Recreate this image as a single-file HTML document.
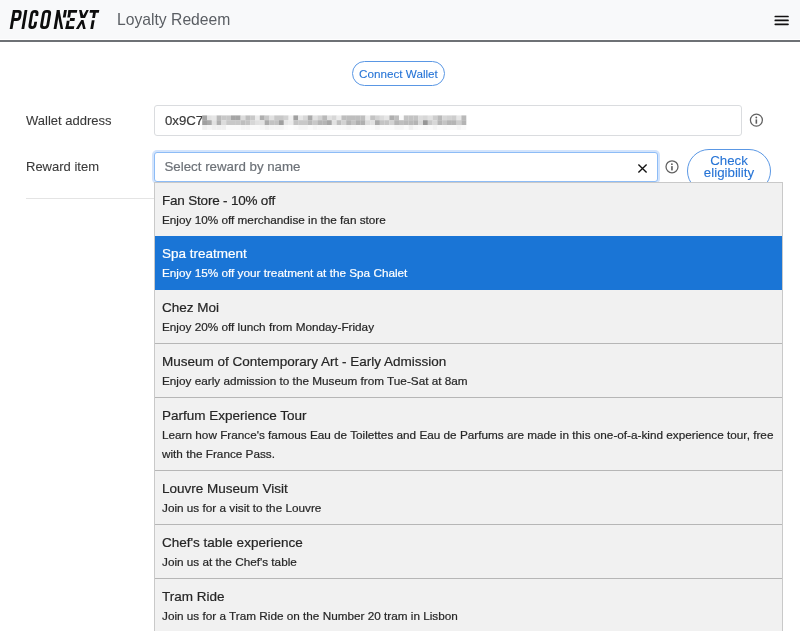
<!DOCTYPE html>
<html><head><meta charset="utf-8">
<style>
*{box-sizing:border-box;margin:0;padding:0}
html,body{width:800px;height:631px;overflow:hidden;background:#fff;-webkit-font-smoothing:antialiased;-webkit-text-stroke:0.2px;font-family:"Liberation Sans",sans-serif;color:#333}
.a{position:absolute;white-space:nowrap}
.hdr{position:absolute;left:0;top:0;width:800px;height:39px;background:#f8f9fa}
.hline{position:absolute;left:0;top:40px;width:800px;height:2px;background:#6e7175}
.title{left:117px;top:9.5px;font-size:15.7px;line-height:20px;color:#5a5e63;-webkit-text-stroke:0}
.burger i{position:absolute;left:774.5px;width:14px;height:1.8px;background:#111;border-radius:1px}
.cw{position:absolute;left:352px;top:61px;width:93px;height:25px;border:1px solid #5a97e4;border-radius:13px}
.cwt{left:359px;top:64.5px;font-size:11.7px;line-height:18px;color:#2674d6;-webkit-text-stroke:0.1px}
.lbl{font-size:13px;line-height:16px;color:#3a3a3a;-webkit-text-stroke:0.1px}
.inp{position:absolute;border:1px solid #dadcdf;border-radius:3px;background:#fff}
.info{position:absolute;width:13.2px;height:13.2px;border:1.3px solid #666;border-radius:50%}
.info:before{content:"";position:absolute;left:4.75px;top:2.7px;width:1.6px;height:1.6px;background:#666;border-radius:50%}
.info:after{content:"";position:absolute;left:4.8px;top:5.4px;width:1.5px;height:4px;background:#666}
.ce{position:absolute;left:686.5px;top:148.5px;width:84px;height:44px;border:1px solid #5a97e4;border-radius:22px;background:#fff}
.cet{font-size:13.3px;line-height:12px;color:#2674d6;text-align:center;-webkit-text-stroke:0.1px}
.hr{position:absolute;left:26px;top:198px;width:128px;height:1px;background:#e4e4e4}
.dd{will-change:transform;position:absolute;left:154px;top:182px;width:629px;height:460px;background:#f1f1f1;border:1px solid #c9c9c9;border-bottom:0}
.it{position:absolute;left:0;width:627px;background:#f1f1f1}
.bd{position:absolute;left:0;width:627px;height:1px;background:#b6b6b6}
.t{position:absolute;left:7px;top:8px;font-size:13.5px;line-height:19px;color:#262626;white-space:nowrap}
.d{position:absolute;left:7px;top:27px;font-size:11.75px;line-height:19px;color:#262626;white-space:nowrap}
.sel{background:#1a75d6}
.sel .t,.sel .d{color:#fff}
</style></head><body>
<div id="w" style="position:absolute;left:0;top:0;width:800px;height:631px;will-change:transform">
<div class="hdr"></div>
<div class="hline"></div>
<svg class="a" style="left:0;top:0" width="110" height="40" viewBox="0 0 110 40">
 <g transform="translate(0,10) skewX(-9.5) translate(0,-10)" fill="none" stroke="#0d0d0d" stroke-width="2.8">
  <path d="M14.3,10V29"/>
  <path d="M14.3,11.4H18.4Q20.9,11.4 20.9,13.9V17Q20.9,19.5 18.4,19.5H14.3"/>
  <path d="M26,10V29"/>
  <path d="M37.7,16V13.9Q37.7,11.4 35,11.4Q32.4,11.4 32.4,13.9V25.1Q32.4,27.6 35,27.6Q37.7,27.6 37.7,25.1V21.8"/>
  <path d="M44.1,13.9Q44.1,11.4 46.6,11.4H47.7Q50.3,11.4 50.3,13.9V25.1Q50.3,27.6 47.7,27.6H46.6Q44.1,27.6 44.1,25.1Z"/>
  <path d="M58.2,10V29"/>
  <path d="M65.5,10V17.6"/>
  <path d="M70,10V17.6M70,20.8V29"/>
  <path d="M68.6,11.4H77.3M71.5,19.5H76.3M68.6,27.6H77"/>
  <path d="M90,11.4H99.3M94.9,12V17.9M94.9,20.2V29"/>
 </g>
 <g transform="translate(0,10) skewX(-9.5) translate(0,-10)" fill="#0d0d0d">
  <polygon points="56.8,10 59.5,10 66.3,29 63.8,29"/>
 </g>
 <g fill="#0d0d0d">
  <polygon points="79.1,10 81.6,10 83.3,15.6 86.4,10 88.8,10 85.0,17.9 80.6,17.9"/>
  <polygon points="81.3,20 83.5,20 85.7,28.9 83.1,28.9 81.8,23.4 78.7,28.9 75.8,28.9"/>
 </g>
</svg>
<div class="a title">Loyalty Redeem</div>
<svg class="a" style="left:770px;top:10px" width="24" height="20" viewBox="770 10 24 20"><path d="M775.3,16.5H788M775.3,20.4H788M775.3,24.3H788" stroke="#111" stroke-width="1.7" stroke-linecap="round"/></svg>

<div class="cw"></div>
<div class="a cwt">Connect Wallet</div>

<div class="a lbl" style="left:26px;top:112.5px">Wallet address</div>
<div class="inp" style="left:154px;top:105px;width:588px;height:31px"></div>
<div class="a" style="left:165px;top:111px;font-size:13.2px;line-height:19px;color:#3b3b3b">0x9C7</div>
<svg class="a" style="left:0;top:0" width="800" height="140" viewBox="0 0 800 140"><rect x="202.2" y="115.4" width="4.9" height="4.9" fill="#a5a5a5"/><rect x="202.2" y="120.2" width="4.9" height="4.9" fill="#a0a0a0"/><rect x="202.2" y="125.0" width="4.9" height="4.9" fill="#f0f0f0"/><rect x="207.0" y="115.4" width="4.9" height="4.9" fill="#e1e1e1"/><rect x="207.0" y="120.2" width="4.9" height="4.9" fill="#aaaaaa"/><rect x="207.0" y="125.0" width="4.9" height="4.9" fill="#f5f5f5"/><rect x="211.8" y="115.4" width="4.9" height="4.9" fill="#e6e6e6"/><rect x="211.8" y="120.2" width="4.9" height="4.9" fill="#e1e1e1"/><rect x="211.8" y="125.0" width="4.9" height="4.9" fill="#f0f0f0"/><rect x="216.6" y="115.4" width="4.9" height="4.9" fill="#b9b9b9"/><rect x="216.6" y="120.2" width="4.9" height="4.9" fill="#afafaf"/><rect x="216.6" y="125.0" width="4.9" height="4.9" fill="#f0f0f0"/><rect x="221.4" y="115.4" width="4.9" height="4.9" fill="#c8c8c8"/><rect x="221.4" y="120.2" width="4.9" height="4.9" fill="#dcdcdc"/><rect x="221.4" y="125.0" width="4.9" height="4.9" fill="#f0f0f0"/><rect x="226.2" y="115.4" width="4.9" height="4.9" fill="#c8c8c8"/><rect x="226.2" y="120.2" width="4.9" height="4.9" fill="#c8c8c8"/><rect x="226.2" y="125.0" width="4.9" height="4.9" fill="#fafafa"/><rect x="231.0" y="115.4" width="4.9" height="4.9" fill="#a5a5a5"/><rect x="231.0" y="120.2" width="4.9" height="4.9" fill="#c8c8c8"/><rect x="231.0" y="125.0" width="4.9" height="4.9" fill="#fafafa"/><rect x="235.8" y="115.4" width="4.9" height="4.9" fill="#a5a5a5"/><rect x="235.8" y="120.2" width="4.9" height="4.9" fill="#c8c8c8"/><rect x="235.8" y="125.0" width="4.9" height="4.9" fill="#fafafa"/><rect x="240.6" y="115.4" width="4.9" height="4.9" fill="#dcdcdc"/><rect x="240.6" y="120.2" width="4.9" height="4.9" fill="#bebebe"/><rect x="240.6" y="125.0" width="4.9" height="4.9" fill="#f5f5f5"/><rect x="245.4" y="115.4" width="4.9" height="4.9" fill="#bebebe"/><rect x="245.4" y="120.2" width="4.9" height="4.9" fill="#c3c3c3"/><rect x="245.4" y="125.0" width="4.9" height="4.9" fill="#f5f5f5"/><rect x="250.2" y="115.4" width="4.9" height="4.9" fill="#c8c8c8"/><rect x="250.2" y="120.2" width="4.9" height="4.9" fill="#d7d7d7"/><rect x="250.2" y="125.0" width="4.9" height="4.9" fill="#fafafa"/><rect x="255.0" y="115.4" width="4.9" height="4.9" fill="#ebebeb"/><rect x="255.0" y="120.2" width="4.9" height="4.9" fill="#e1e1e1"/><rect x="255.0" y="125.0" width="4.9" height="4.9" fill="#fafafa"/><rect x="259.8" y="115.4" width="4.9" height="4.9" fill="#afafaf"/><rect x="259.8" y="120.2" width="4.9" height="4.9" fill="#e1e1e1"/><rect x="259.8" y="125.0" width="4.9" height="4.9" fill="#f5f5f5"/><rect x="264.6" y="115.4" width="4.9" height="4.9" fill="#c8c8c8"/><rect x="264.6" y="120.2" width="4.9" height="4.9" fill="#aaaaaa"/><rect x="264.6" y="125.0" width="4.9" height="4.9" fill="#f0f0f0"/><rect x="269.4" y="115.4" width="4.9" height="4.9" fill="#e1e1e1"/><rect x="269.4" y="120.2" width="4.9" height="4.9" fill="#c3c3c3"/><rect x="269.4" y="125.0" width="4.9" height="4.9" fill="#f5f5f5"/><rect x="274.2" y="115.4" width="4.9" height="4.9" fill="#c8c8c8"/><rect x="274.2" y="120.2" width="4.9" height="4.9" fill="#c3c3c3"/><rect x="274.2" y="125.0" width="4.9" height="4.9" fill="#f5f5f5"/><rect x="279.0" y="115.4" width="4.9" height="4.9" fill="#c8c8c8"/><rect x="279.0" y="120.2" width="4.9" height="4.9" fill="#a0a0a0"/><rect x="279.0" y="125.0" width="4.9" height="4.9" fill="#f5f5f5"/><rect x="283.8" y="115.4" width="4.9" height="4.9" fill="#d2d2d2"/><rect x="283.8" y="120.2" width="4.9" height="4.9" fill="#e6e6e6"/><rect x="283.8" y="125.0" width="4.9" height="4.9" fill="#fafafa"/><rect x="288.6" y="115.4" width="4.9" height="4.9" fill="#f0f0f0"/><rect x="288.6" y="120.2" width="4.9" height="4.9" fill="#ebebeb"/><rect x="288.6" y="125.0" width="4.9" height="4.9" fill="#fcfcfc"/><rect x="293.4" y="115.4" width="4.9" height="4.9" fill="#a0a0a0"/><rect x="293.4" y="120.2" width="4.9" height="4.9" fill="#c3c3c3"/><rect x="293.4" y="125.0" width="4.9" height="4.9" fill="#fafafa"/><rect x="298.2" y="115.4" width="4.9" height="4.9" fill="#e6e6e6"/><rect x="298.2" y="120.2" width="4.9" height="4.9" fill="#c8c8c8"/><rect x="298.2" y="125.0" width="4.9" height="4.9" fill="#f5f5f5"/><rect x="303.0" y="115.4" width="4.9" height="4.9" fill="#d7d7d7"/><rect x="303.0" y="120.2" width="4.9" height="4.9" fill="#c8c8c8"/><rect x="303.0" y="125.0" width="4.9" height="4.9" fill="#f5f5f5"/><rect x="307.8" y="115.4" width="4.9" height="4.9" fill="#aaaaaa"/><rect x="307.8" y="120.2" width="4.9" height="4.9" fill="#b9b9b9"/><rect x="307.8" y="125.0" width="4.9" height="4.9" fill="#fafafa"/><rect x="312.6" y="115.4" width="4.9" height="4.9" fill="#e1e1e1"/><rect x="312.6" y="120.2" width="4.9" height="4.9" fill="#c8c8c8"/><rect x="312.6" y="125.0" width="4.9" height="4.9" fill="#f5f5f5"/><rect x="317.4" y="115.4" width="4.9" height="4.9" fill="#d2d2d2"/><rect x="317.4" y="120.2" width="4.9" height="4.9" fill="#b4b4b4"/><rect x="317.4" y="125.0" width="4.9" height="4.9" fill="#f8f8f8"/><rect x="322.2" y="115.4" width="4.9" height="4.9" fill="#b9b9b9"/><rect x="322.2" y="120.2" width="4.9" height="4.9" fill="#b4b4b4"/><rect x="322.2" y="125.0" width="4.9" height="4.9" fill="#f8f8f8"/><rect x="327.0" y="115.4" width="4.9" height="4.9" fill="#e1e1e1"/><rect x="327.0" y="120.2" width="4.9" height="4.9" fill="#a5a5a5"/><rect x="327.0" y="125.0" width="4.9" height="4.9" fill="#fafafa"/><rect x="331.8" y="115.4" width="4.9" height="4.9" fill="#d7d7d7"/><rect x="331.8" y="120.2" width="4.9" height="4.9" fill="#e1e1e1"/><rect x="331.8" y="125.0" width="4.9" height="4.9" fill="#f8f8f8"/><rect x="336.6" y="115.4" width="4.9" height="4.9" fill="#ebebeb"/><rect x="336.6" y="120.2" width="4.9" height="4.9" fill="#bebebe"/><rect x="336.6" y="125.0" width="4.9" height="4.9" fill="#f8f8f8"/><rect x="341.4" y="115.4" width="4.9" height="4.9" fill="#bebebe"/><rect x="341.4" y="120.2" width="4.9" height="4.9" fill="#d2d2d2"/><rect x="341.4" y="125.0" width="4.9" height="4.9" fill="#f8f8f8"/><rect x="346.2" y="115.4" width="4.9" height="4.9" fill="#bebebe"/><rect x="346.2" y="120.2" width="4.9" height="4.9" fill="#b4b4b4"/><rect x="346.2" y="125.0" width="4.9" height="4.9" fill="#f5f5f5"/><rect x="351.0" y="115.4" width="4.9" height="4.9" fill="#bebebe"/><rect x="351.0" y="120.2" width="4.9" height="4.9" fill="#c3c3c3"/><rect x="351.0" y="125.0" width="4.9" height="4.9" fill="#f8f8f8"/><rect x="355.8" y="115.4" width="4.9" height="4.9" fill="#bebebe"/><rect x="355.8" y="120.2" width="4.9" height="4.9" fill="#afafaf"/><rect x="355.8" y="125.0" width="4.9" height="4.9" fill="#fafafa"/><rect x="360.6" y="115.4" width="4.9" height="4.9" fill="#bebebe"/><rect x="360.6" y="120.2" width="4.9" height="4.9" fill="#afafaf"/><rect x="360.6" y="125.0" width="4.9" height="4.9" fill="#f8f8f8"/><rect x="365.4" y="115.4" width="4.9" height="4.9" fill="#ebebeb"/><rect x="365.4" y="120.2" width="4.9" height="4.9" fill="#dcdcdc"/><rect x="365.4" y="125.0" width="4.9" height="4.9" fill="#fafafa"/><rect x="370.2" y="115.4" width="4.9" height="4.9" fill="#c3c3c3"/><rect x="370.2" y="120.2" width="4.9" height="4.9" fill="#e1e1e1"/><rect x="370.2" y="125.0" width="4.9" height="4.9" fill="#fafafa"/><rect x="375.0" y="115.4" width="4.9" height="4.9" fill="#d2d2d2"/><rect x="375.0" y="120.2" width="4.9" height="4.9" fill="#aaaaaa"/><rect x="375.0" y="125.0" width="4.9" height="4.9" fill="#f5f5f5"/><rect x="379.8" y="115.4" width="4.9" height="4.9" fill="#dcdcdc"/><rect x="379.8" y="120.2" width="4.9" height="4.9" fill="#c3c3c3"/><rect x="379.8" y="125.0" width="4.9" height="4.9" fill="#fafafa"/><rect x="384.6" y="115.4" width="4.9" height="4.9" fill="#e6e6e6"/><rect x="384.6" y="120.2" width="4.9" height="4.9" fill="#c3c3c3"/><rect x="384.6" y="125.0" width="4.9" height="4.9" fill="#fafafa"/><rect x="389.4" y="115.4" width="4.9" height="4.9" fill="#afafaf"/><rect x="389.4" y="120.2" width="4.9" height="4.9" fill="#d2d2d2"/><rect x="389.4" y="125.0" width="4.9" height="4.9" fill="#fafafa"/><rect x="394.2" y="115.4" width="4.9" height="4.9" fill="#bebebe"/><rect x="394.2" y="120.2" width="4.9" height="4.9" fill="#b4b4b4"/><rect x="394.2" y="125.0" width="4.9" height="4.9" fill="#f5f5f5"/><rect x="399.0" y="115.4" width="4.9" height="4.9" fill="#fafafa"/><rect x="399.0" y="120.2" width="4.9" height="4.9" fill="#bebebe"/><rect x="399.0" y="125.0" width="4.9" height="4.9" fill="#f5f5f5"/><rect x="403.8" y="115.4" width="4.9" height="4.9" fill="#c3c3c3"/><rect x="403.8" y="120.2" width="4.9" height="4.9" fill="#b9b9b9"/><rect x="403.8" y="125.0" width="4.9" height="4.9" fill="#fafafa"/><rect x="408.6" y="115.4" width="4.9" height="4.9" fill="#c3c3c3"/><rect x="408.6" y="120.2" width="4.9" height="4.9" fill="#b9b9b9"/><rect x="408.6" y="125.0" width="4.9" height="4.9" fill="#f0f0f0"/><rect x="413.4" y="115.4" width="4.9" height="4.9" fill="#c3c3c3"/><rect x="413.4" y="120.2" width="4.9" height="4.9" fill="#b4b4b4"/><rect x="413.4" y="125.0" width="4.9" height="4.9" fill="#f8f8f8"/><rect x="418.2" y="115.4" width="4.9" height="4.9" fill="#dcdcdc"/><rect x="418.2" y="120.2" width="4.9" height="4.9" fill="#d7d7d7"/><rect x="418.2" y="125.0" width="4.9" height="4.9" fill="#fafafa"/><rect x="423.0" y="115.4" width="4.9" height="4.9" fill="#d7d7d7"/><rect x="423.0" y="120.2" width="4.9" height="4.9" fill="#969696"/><rect x="423.0" y="125.0" width="4.9" height="4.9" fill="#f8f8f8"/><rect x="427.8" y="115.4" width="4.9" height="4.9" fill="#e1e1e1"/><rect x="427.8" y="120.2" width="4.9" height="4.9" fill="#c8c8c8"/><rect x="427.8" y="125.0" width="4.9" height="4.9" fill="#fafafa"/><rect x="432.6" y="115.4" width="4.9" height="4.9" fill="#cdcdcd"/><rect x="432.6" y="120.2" width="4.9" height="4.9" fill="#d7d7d7"/><rect x="432.6" y="125.0" width="4.9" height="4.9" fill="#f5f5f5"/><rect x="437.4" y="115.4" width="4.9" height="4.9" fill="#b9b9b9"/><rect x="437.4" y="120.2" width="4.9" height="4.9" fill="#b4b4b4"/><rect x="437.4" y="125.0" width="4.9" height="4.9" fill="#fafafa"/><rect x="442.2" y="115.4" width="4.9" height="4.9" fill="#d7d7d7"/><rect x="442.2" y="120.2" width="4.9" height="4.9" fill="#c3c3c3"/><rect x="442.2" y="125.0" width="4.9" height="4.9" fill="#f8f8f8"/><rect x="447.0" y="115.4" width="4.9" height="4.9" fill="#d2d2d2"/><rect x="447.0" y="120.2" width="4.9" height="4.9" fill="#b4b4b4"/><rect x="447.0" y="125.0" width="4.9" height="4.9" fill="#fafafa"/><rect x="451.8" y="115.4" width="4.9" height="4.9" fill="#cdcdcd"/><rect x="451.8" y="120.2" width="4.9" height="4.9" fill="#b4b4b4"/><rect x="451.8" y="125.0" width="4.9" height="4.9" fill="#fafafa"/><rect x="456.6" y="115.4" width="4.9" height="4.9" fill="#e6e6e6"/><rect x="456.6" y="120.2" width="4.9" height="4.9" fill="#cdcdcd"/><rect x="456.6" y="125.0" width="4.9" height="4.9" fill="#f5f5f5"/><rect x="461.4" y="115.4" width="4.9" height="4.9" fill="#b9b9b9"/><rect x="461.4" y="120.2" width="4.9" height="4.9" fill="#b4b4b4"/><rect x="461.4" y="125.0" width="4.9" height="4.9" fill="#fafafa"/></svg>

<div class="a lbl" style="left:26px;top:158.8px">Reward item</div>
<div class="inp" style="left:154px;top:152px;width:504px;height:30px;border-color:#8dbcf6;box-shadow:0 0 0 2px #d3e4fc"></div>
<div class="a" style="left:164.5px;top:157px;font-size:13.3px;line-height:19px;color:#6d7278">Select reward by name</div>
<svg class="a" style="left:637px;top:163px" width="11" height="11" viewBox="0 0 11 11"><path d="M1.4,1.4L9.6,9.6M9.6,1.4L1.4,9.6" stroke="#111" stroke-width="1.35"/></svg>
<svg class="a" style="left:0;top:0" width="800" height="200" viewBox="0 0 800 200"><circle cx="756.4" cy="120.1" r="6" fill="none" stroke="#616161" stroke-width="1.25"/><circle cx="756.3" cy="117.5" r="0.9" fill="#5e5e5e"/><rect x="755.55" y="119.4" width="1.6" height="4.3" fill="#5e5e5e"/><circle cx="672" cy="166.8" r="6" fill="none" stroke="#616161" stroke-width="1.25"/><circle cx="671.9" cy="164.2" r="0.9" fill="#5e5e5e"/><rect x="671.15" y="166.1" width="1.6" height="4.3" fill="#5e5e5e"/></svg>
<div class="ce"></div>
<div class="a cet" style="left:687px;top:155px;width:84px">Check<br>eligibility</div>
<div class="hr"></div>

<div class="dd">
  <div class="it" style="top:0;height:54px"><div class="t" style="letter-spacing:-0.2px">Fan Store - 10% off</div><div class="d">Enjoy 10% off merchandise in the fan store</div></div>
  <div class="it sel" style="top:53px;height:54px"><div class="t">Spa treatment</div><div class="d">Enjoy 15% off your treatment at the Spa Chalet</div></div>
  <div class="it" style="top:107px;height:53px"><div class="t">Chez Moi</div><div class="d">Enjoy 20% off lunch from Monday-Friday</div></div>
  <div class="bd" style="top:160px"></div>
  <div class="it" style="top:161px;height:53px"><div class="t">Museum of Contemporary Art - Early Admission</div><div class="d">Enjoy early admission to the Museum from Tue-Sat at 8am</div></div>
  <div class="bd" style="top:214px"></div>
  <div class="it" style="top:215px;height:72px"><div class="t">Parfum Experience Tour</div><div class="d">Learn how France's famous Eau de Toilettes and Eau de Parfums are made in this one-of-a-kind experience tour, free<br>with the France Pass.</div></div>
  <div class="bd" style="top:287px"></div>
  <div class="it" style="top:288px;height:53px"><div class="t">Louvre Museum Visit</div><div class="d">Join us for a visit to the Louvre</div></div>
  <div class="bd" style="top:341px"></div>
  <div class="it" style="top:342px;height:53px"><div class="t">Chef's table experience</div><div class="d">Join us at the Chef's table</div></div>
  <div class="bd" style="top:395px"></div>
  <div class="it" style="top:396px;height:60px"><div class="t">Tram Ride</div><div class="d">Join us for a Tram Ride on the Number 20 tram in Lisbon</div></div>
</div>
</div>
</body></html>
